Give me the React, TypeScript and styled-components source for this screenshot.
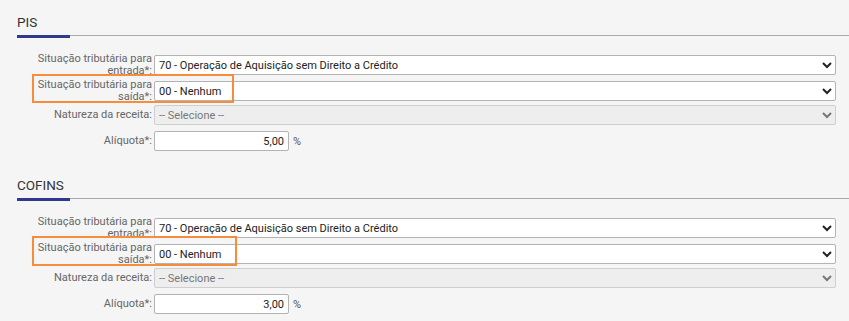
import React from "react";
import styled, { createGlobalStyle } from "styled-components";

const Global = createGlobalStyle`
  html, body { margin: 0; padding: 0; background: #f5f5f5; }
  body { font-family: Roboto, "Liberation Sans", Arial, sans-serif; }
`;

const Page = styled.div`
  padding: 14px 0 0 17px;
  width: 832px;
`;

const Section = styled.section`
  margin-bottom: 26px;
`;

const Heading = styled.h2`
  margin: 0;
  font-size: 13.5px;
  line-height: 16px;
  font-weight: 400;
  color: #333;
`;

const Divider = styled.div`
  display: flex;
  align-items: flex-start;
  height: 3px;
  margin-top: 5px;
`;

const Accent = styled.div`
  width: 53px;
  height: 3px;
  background: #2e3a8c;
`;

const Rule = styled.div`
  flex: 1;
  height: 1px;
  background: #aaaaaa;
`;

const Form = styled.div`
  display: flex;
  flex-direction: column;
  gap: 6px;
  margin-top: 15px;
  width: 819px;
`;

const Row = styled.div`
  position: relative;
  display: grid;
  grid-template-columns: 135px 1fr;
  column-gap: 2px;
  height: 20px;
  align-items: center;
`;

const Label = styled.label`
  text-align: right;
  font-size: 11px;
  line-height: 12px;
  color: #666;
  padding-left: 18px;
`;

const Select = styled.select`
  width: 100%;
  height: 20px;
  box-sizing: border-box;
  border: 1px solid #b3b3b3;
  border-radius: 2px;
  background: #fff;
  font-family: Roboto, "Liberation Sans", Arial, sans-serif;
  font-size: 11px;
  color: #222;
  padding: 0;
  margin: 0;
  &:disabled {
    background: #eeeeee;
    border-color: #cfcfcf;
    color: #777;
    opacity: 1;
  }
`;

const InputWrap = styled.div`
  display: flex;
  align-items: center;
  gap: 4px;
`;

const NumberInput = styled.input`
  width: 135px;
  height: 20px;
  box-sizing: border-box;
  border: 1px solid #b3b3b3;
  border-radius: 2px;
  background: #fff;
  font-family: Roboto, "Liberation Sans", Arial, sans-serif;
  font-size: 11px;
  color: #222;
  text-align: right;
  padding: 0 4px;
  margin: 0;
`;

const Unit = styled.span`
  font-size: 11px;
  color: #555;
`;

const Highlight = styled.div<{ $w: number; $h: number; $top: number }>`
  position: absolute;
  left: 15px;
  top: ${(p) => p.$top}px;
  width: ${(p) => p.$w}px;
  height: ${(p) => p.$h}px;
  box-sizing: border-box;
  border: 2px solid #f68d3c;
  pointer-events: none;
`;

type SectionProps = {
  title: string;
  rate: string;
  hl: { w: number; h: number; top: number };
};

const TaxSection: React.FC<SectionProps> = ({ title, rate, hl }) => (
  <Section>
    <Heading>{title}</Heading>
    <Divider>
      <Accent />
      <Rule />
    </Divider>
    <Form>
      <Row>
        <Label>Situação tributária para entrada*:</Label>
        <Select defaultValue="70">
          <option value="70">70 - Operação de Aquisição sem Direito a Crédito</option>
        </Select>
      </Row>
      <Row>
        <Label>Situação tributária para saída*:</Label>
        <Select defaultValue="00">
          <option value="00">00 - Nenhum</option>
        </Select>
        <Highlight $w={hl.w} $h={hl.h} $top={hl.top} />
      </Row>
      <Row>
        <Label>Natureza da receita:</Label>
        <Select disabled defaultValue="">
          <option value="">-- Selecione --</option>
        </Select>
      </Row>
      <Row>
        <Label>Alíquota*:</Label>
        <InputWrap>
          <NumberInput type="text" defaultValue={rate} />
          <Unit>%</Unit>
        </InputWrap>
      </Row>
    </Form>
  </Section>
);

export default function App() {
  return (
    <>
      <Global />
      <Page>
        <TaxSection title="PIS" rate="5,00" hl={{ w: 202, h: 29, top: -5 }} />
        <TaxSection title="COFINS" rate="3,00" hl={{ w: 205, h: 30, top: -6 }} />
      </Page>
    </>
  );
}
